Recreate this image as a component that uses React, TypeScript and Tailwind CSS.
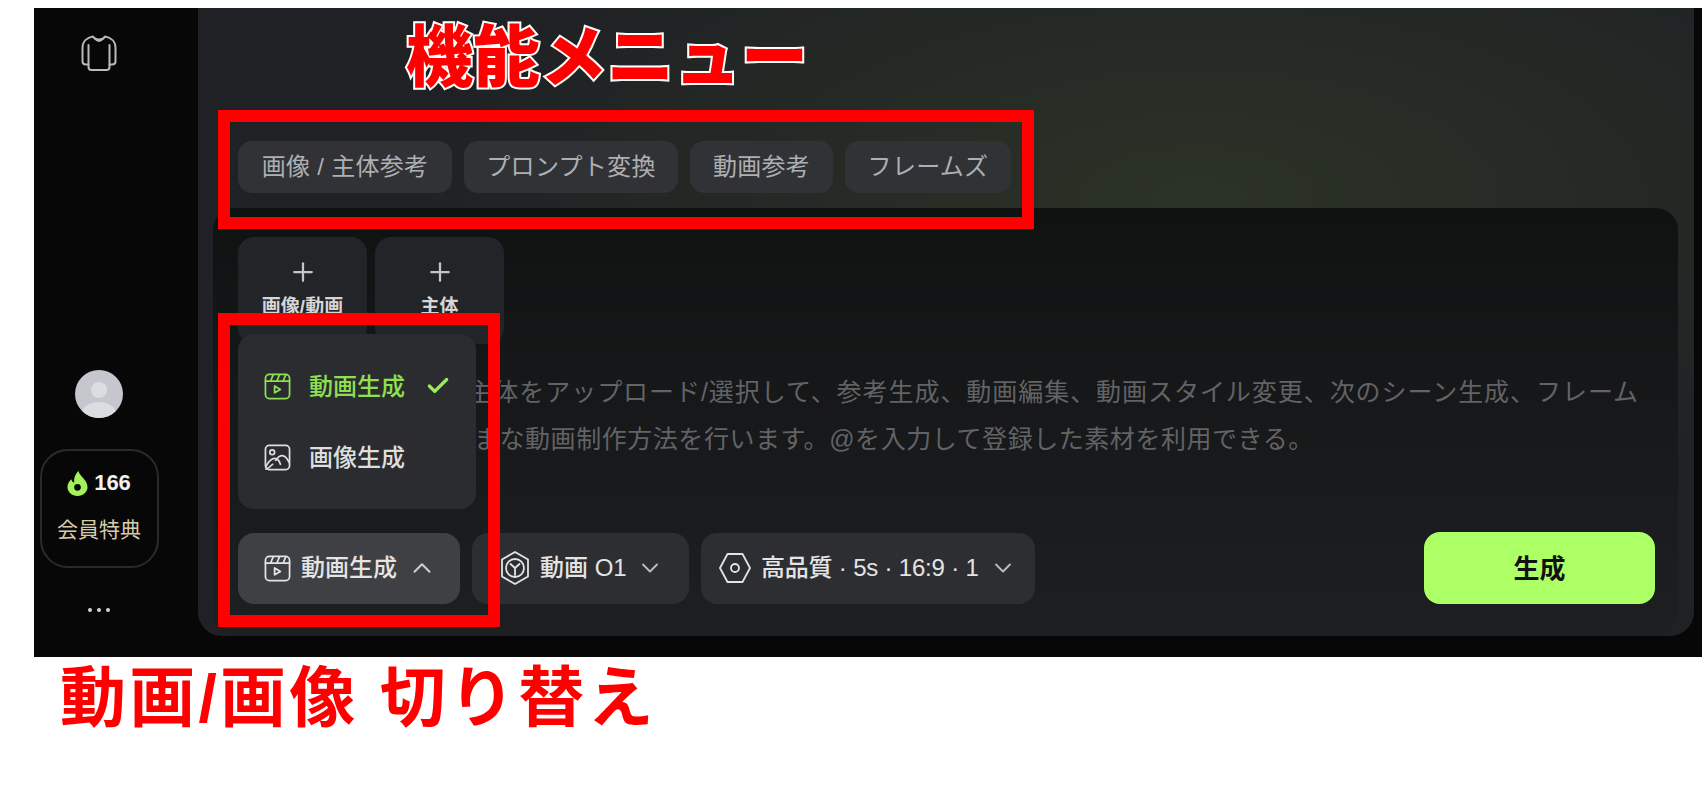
import React from "react";
import { Check, ChevronDown, ChevronUp, Plus } from "lucide-react";

const FONT = "font-['Liberation_Sans','Noto_Sans_CJK_JP',sans-serif]";

const ClapperIcon = ({ className }: { className?: string }) => (
  <svg viewBox="0 0 28 28" fill="none" stroke="currentColor" strokeWidth="1.8" strokeLinejoin="round" strokeLinecap="round" className={className}>
    <rect x="1.5" y="1.5" width="25" height="25" rx="4" />
    <path d="M1.5 8.5h25M7 8 9.5 2M13.5 8 16 2M20 8l2.5-6" />
    <path d="M11 13.5v7l6-3.5z" />
  </svg>
);

const PictureIcon = ({ className }: { className?: string }) => (
  <svg viewBox="0 0 28 28" fill="none" stroke="currentColor" strokeWidth="1.8" strokeLinejoin="round" strokeLinecap="round" className={className}>
    <rect x="1.5" y="1.5" width="25" height="25" rx="4" />
    <circle cx="8.5" cy="8.5" r="2.5" />
    <path d="M2 23c3-5 6-8 9-8s5 3 6 6M2 26c3-1 5-3 7-5M12 17c2-3 5-5 7-5s5 3 7 7" />
  </svg>
);

const ModelIcon = ({ className }: { className?: string }) => (
  <svg viewBox="0 0 32 36" fill="none" stroke="currentColor" strokeWidth="1.8" strokeLinejoin="round" strokeLinecap="round" className={className}>
    <path d="M16 2 29 9.500v17L16 34 3 26.500v-17z" />
    <circle cx="16" cy="18" r="9" />
    <path d="M11.500 14l4.500 4 4.500-4M16 18v7" />
  </svg>
);

const QualityIcon = ({ className }: { className?: string }) => (
  <svg viewBox="0 0 34 32" fill="none" stroke="currentColor" strokeWidth="1.8" strokeLinejoin="round" className={className}>
    <path d="M9.500 2h15L32 16l-7.500 14h-15L2 16z" />
    <circle cx="17" cy="16" r="4" />
  </svg>
);

const ShirtIcon = ({ className }: { className?: string }) => (
  <svg viewBox="0 0 38 38" fill="none" stroke="currentColor" strokeWidth="2" strokeLinejoin="round" strokeLinecap="round" className={className}>
    <path d="M13 2.500c-6 1-10.500 5-10.500 11v14c0 2 1.500 3 3.500 3h2.500v2.500c0 2 1 3 3 3h15c2 0 3-1 3-3v-2.500H32c2 0 3.500-1 3.500-3v-14c0-6-4.500-10-10.500-11-1 2-3 3-6 3s-5-1-6-3z" />
    <path d="M8.500 11v19.500M29.500 11v19.500M15 4.500c1 1.500 2.500 2.500 4 2.500s3-1 4-2.500" />
  </svg>
);

const Flame = ({ className }: { className?: string }) => (
  <svg viewBox="0 0 22 26" className={className}>
    <path
      fillRule="evenodd"
      fill="#a4f25b"
      d="M12 0c1 3.500 3 5 5.500 8 2.500 3 4 5.500 4 9 0 5-4.500 9-10.500 9S0.500 22 0.500 17c0-4 2-6.500 4-8.500.5 2 1.500 3 3 3.500C7 7 9 3 12 0zM11 13.500a3.500 3.500 0 1 0 0 7 3.500 3.500 0 0 0 0-7z"
    />
  </svg>
);

const Avatar = () => (
  <svg viewBox="0 0 48 48" className="h-12 w-12 rounded-full">
    <rect width="48" height="48" fill="#c6c7ce" />
    <circle cx="24" cy="20" r="8" fill="#dcdde1" />
    <ellipse cx="24" cy="44" rx="17" ry="12" fill="#dcdde1" />
  </svg>
);

const featureChips = [
  { label: "画像 / 主体参考", width: "w-[214px]" },
  { label: "プロンプト変換", width: "w-[214px]" },
  { label: "動画参考", width: "w-[143px]" },
  { label: "フレームズ", width: "w-[166px]" },
];

const Sidebar = () => (
  <aside className="flex h-full w-[164px] shrink-0 flex-col items-center bg-[#070707] pt-[26px] pr-[34px] pb-[45px]">
    <ShirtIcon className="h-[38px] w-[38px] text-[#b9babd]" />
    <div className="mt-auto">
      <Avatar />
    </div>
    <div className="mt-[31px] flex h-[119px] w-[119px] shrink-0 flex-col items-center rounded-[28px] border-2 border-[#2a2a2a] pt-[18px]">
      <div className="flex items-center gap-[6px]">
        <Flame className="h-[25px] w-[21px]" />
        <span className="text-[22px] leading-[28px] font-bold text-[#f2f2f2]">166</span>
      </div>
      <span className="mt-[20px] text-[21px] leading-[26px] text-[#d8cdaa]">会員特典</span>
    </div>
    <div className="mt-[40px] flex gap-[5px]">
      <span className="h-[4px] w-[4px] rounded-full bg-[#d5d5d5]" />
      <span className="h-[4px] w-[4px] rounded-full bg-[#d5d5d5]" />
      <span className="h-[4px] w-[4px] rounded-full bg-[#d5d5d5]" />
    </div>
  </aside>
);

const UploadTile = ({ label }: { label: string }) => (
  <div className="flex h-[107px] w-[129px] flex-col items-center rounded-[16px] bg-[#232427] pt-[20px]">
    <Plus className="h-[30px] w-[30px] text-[#c4c5c7]" strokeWidth={1.8} />
    <span className="mt-[7px] text-[19px] leading-[26px] font-bold text-[#d6d6d6]">{label}</span>
  </div>
);

const ModeMenu = () => (
  <div className="absolute bottom-full left-0 mb-[24px] flex h-[175px] w-[238px] flex-col rounded-[16px] bg-[#2b2c30] pt-[39px] pl-[26px]">
    <div className="flex h-[27px] items-center text-[#8fe04f]">
      <ClapperIcon className="h-[27px] w-[27px]" />
      <span className="ml-[18px] text-[24px] leading-[27px] font-medium">動画生成</span>
      <Check className="ml-[20px] h-[26px] w-[26px] text-[#9bec57]" strokeWidth={3} />
    </div>
    <div className="mt-[44px] flex h-[27px] items-center text-[#dedede]">
      <PictureIcon className="h-[27px] w-[27px]" />
      <span className="ml-[18px] text-[24px] leading-[27px] font-medium">画像生成</span>
    </div>
  </div>
);

const Toolbar = () => (
  <div className="mt-auto flex items-center">
    <div className="relative">
      <ModeMenu />
      <button className="flex h-[71px] w-[222px] items-center rounded-[16px] bg-[#3f4044] pl-[26px] text-[#e4e4e4]">
        <ClapperIcon className="h-[27px] w-[27px]" />
        <span className="ml-[10px] text-[24px] font-medium">動画生成</span>
        <ChevronUp className="ml-[10px] h-[30px] w-[30px] text-[#cfcfcf]" strokeWidth={1.6} />
      </button>
    </div>
    <button className="ml-[12px] flex h-[71px] w-[217px] items-center rounded-[16px] bg-[#2d2e31] pl-[27px] text-[#e4e4e4]">
      <ModelIcon className="h-[36px] w-[32px]" />
      <span className="ml-[9px] text-[24px] font-medium">動画 O1</span>
      <ChevronDown className="ml-[9px] h-[28px] w-[28px] text-[#bdbdbd]" strokeWidth={1.6} />
    </button>
    <button className="ml-[12px] flex h-[71px] w-[334px] items-center rounded-[16px] bg-[#2d2e31] pl-[17px] text-[#e4e4e4]">
      <QualityIcon className="h-[32px] w-[34px]" />
      <span className="ml-[9px] text-[24px] font-medium tracking-[-0.2px]">高品質 · 5s · 16:9 · 1</span>
      <ChevronDown className="ml-[10px] h-[28px] w-[28px] text-[#bdbdbd]" strokeWidth={1.6} />
    </button>
    <button className="ml-auto h-[72px] w-[231px] rounded-[16px] bg-[#adff66] pt-[3px] text-[26px] font-bold text-[#111]">生成</button>
  </div>
);

const App = () => {
  return (
    <div className={`relative h-[792px] w-[1702px] overflow-hidden bg-white pt-[8px] pl-[34px] ${FONT}`}>
      <div className="flex h-[649px] bg-[#070707]">
        <Sidebar />
        <main className="mr-[8px] mb-[21px] flex flex-1 flex-col rounded-b-[24px] bg-[radial-gradient(#ffffff04_1px,transparent_1.5px),radial-gradient(ellipse_800px_340px_at_1000px_190px,#2b3226,transparent),linear-gradient(#1f2124,#1f2124)] bg-[length:8px_8px,100%_100%,100%_100%] pt-[133px] pr-[16px] pl-[15px]">
          <div className="flex gap-[12px] pl-[25px]">
            {featureChips.map((chip) => (
              <div
                key={chip.label}
                className={`flex h-[52px] items-center justify-center rounded-[14px] bg-[#303236] text-[24px] tracking-[0.3px] text-[#aeafb1] ${chip.width}`}
              >
                {chip.label}
              </div>
            ))}
          </div>
          <section className="mt-[15px] flex flex-1 flex-col rounded-[22px] bg-gradient-to-b from-[#101212] to-[#1e1f22] pt-[29px] pr-[23px] pb-[32px] pl-[25px]">
            <div className="flex gap-[8px]">
              <UploadTile label="画像/動画" />
              <UploadTile label="主体" />
            </div>
            <p className="mt-[25px] pl-[6px] text-[25px] leading-[47px] tracking-[0.95px] whitespace-nowrap text-[#626365]">
              参考用の画像/動画/主体をアップロード/選択して、参考生成、動画編集、動画スタイル変更、次のシーン生成、フレーム
              <br />
              <span className="tracking-[0.55px]">補間などの、さまざまな動画制作方法を行います。@を入力して登録した素材を利用できる。</span>
            </p>
            <Toolbar />
          </section>
        </main>
      </div>

      <p className="mt-[6px] ml-[26px] text-[66px] leading-[70px] font-bold tracking-[3.2px] whitespace-nowrap text-[#ff0000]">動画/画像 切り替え</p>

      {/* annotations pasted over the screenshot */}
      <div className="absolute top-[110px] left-[218px] h-[119px] w-[816px] border-[12px] border-[#ff0000]" />
      <div className="absolute top-[313px] left-[218px] h-[314px] w-[282px] border-[12px] border-[#ff0000]" />
      <p className="absolute top-[18px] left-[406px] text-[67px] leading-[80px] font-black whitespace-nowrap text-[#ff0000] [-webkit-text-stroke:4px_#ffffff] [paint-order:stroke_fill]">
        機能メニュー
      </p>
    </div>
  );
};

export default App;
